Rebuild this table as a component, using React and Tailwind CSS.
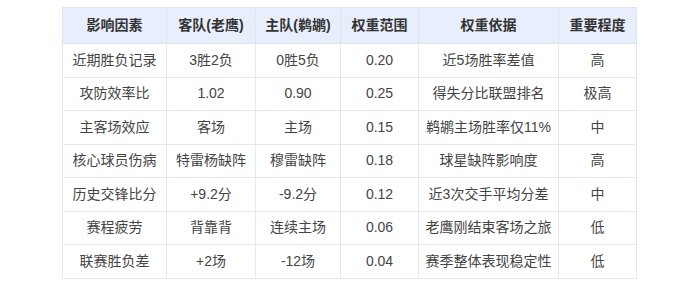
import React from "react";

const rows = [
  ["近期胜负记录", "3胜2负", "0胜5负", "0.20", "近5场胜率差值", "高"],
  ["攻防效率比", "1.02", "0.90", "0.25", "得失分比联盟排名", "极高"],
  ["主客场效应", "客场", "主场", "0.15", "鹈鹕主场胜率仅11%", "中"],
  ["核心球员伤病", "特雷杨缺阵", "穆雷缺阵", "0.18", "球星缺阵影响度", "高"],
  ["历史交锋比分", "+9.2分", "-9.2分", "0.12", "近3次交手平均分差", "中"],
  ["赛程疲劳", "背靠背", "连续主场", "0.06", "老鹰刚结束客场之旅", "低"],
  ["联赛胜负差", "+2场", "-12场", "0.04", "赛季整体表现稳定性", "低"],
];

const headers = ["影响因素", "客队(老鹰)", "主队(鹈鹕)", "权重范围", "权重依据", "重要程度"];
const widths = ["w-[104px]", "w-[89px]", "w-[85px]", "w-[78px]", "w-[140px]", "w-[78px]"];

export default function App() {
  return (
    <div
      className="w-[699px] h-[306px] bg-white pt-[7px] flex justify-center"
      style={{ fontFamily: '"Liberation Sans", "Noto Sans CJK SC", sans-serif' }}
    >
      <table className="border-collapse border border-[#dde4f2] text-[14px] h-fit">
        <thead>
          <tr className="bg-[#e8eefb] h-[36px]">
            {headers.map((h, i) => (
              <th
                key={h}
                className={`${widths[i]} border border-[#dde4f2] font-bold text-[#333] text-center p-0`}
              >
                {h}
              </th>
            ))}
          </tr>
        </thead>
        <tbody>
          {rows.map((r) => (
            <tr key={r[0]} className="h-[33.5px]">
              {r.map((c, i) => (
                <td key={i} className="border border-[#e3e8f3] text-[#444] text-center p-0">
                  {c}
                </td>
              ))}
            </tr>
          ))}
        </tbody>
      </table>
    </div>
  );
}
